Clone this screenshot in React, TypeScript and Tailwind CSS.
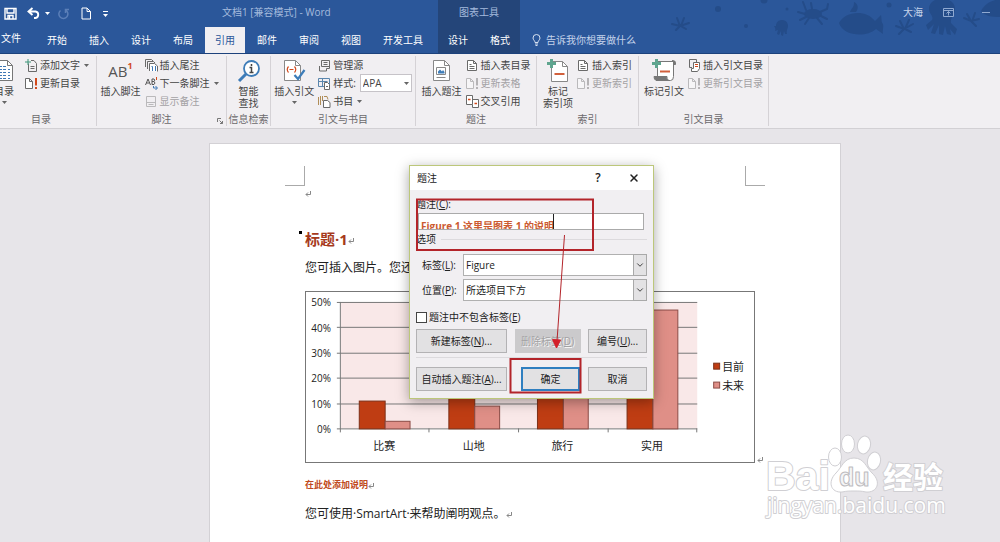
import React from "react";
import type { ReactNode } from "react";
import { ChevronDown, X } from "lucide-react";

/* ---------- small shared pieces ---------- */

function Caret({ className = "" }: { className?: string }) {
  return (
    <svg viewBox="0 0 5 3" className={`h-[3px] w-[5px] shrink-0 fill-current ${className}`} aria-hidden="true">
      <path d="M0 0h5L2.5 3z" />
    </svg>
  );
}

function Icon({ children, dim = false }: { children: ReactNode; dim?: boolean }) {
  return (
    <svg
      viewBox="0 0 13 13"
      className={`h-[13px] w-[13px] shrink-0 ${dim ? "opacity-40" : ""}`}
      fill="none"
      stroke="#6a6a6a"
      strokeWidth="1"
      aria-hidden="true"
    >
      {children}
    </svg>
  );
}

const PageUpdate = ({ dim = false }: { dim?: boolean }) => (
  <Icon dim={dim}>
    <path d="M.5 1.5h4l3 3v7h-7zM4.500 1.500v3h3" fill="#fff" />
    <path d="M11 1v7.500M11 10v2" stroke={dim ? "#5c5c5c" : "#d2491c"} strokeWidth="2" />
  </Icon>
);

const PageLines = () => (
  <Icon>
    <path d="M1.500 1.500h6l3 3v7h-9zM7.500 1.500v3h3" fill="#fff" />
    <path d="M3.500 5.500h2M3.500 7.500h5M3.500 9.500h5" />
  </Icon>
);

function BigButton({ icon, children, arrow = false }: { icon: ReactNode; children: ReactNode; arrow?: boolean }) {
  return (
    <button type="button" className="flex shrink-0 flex-col items-center whitespace-nowrap leading-3">
      <span className="flex h-[29px] items-center">{icon}</span>
      <span>{children}</span>
      {arrow && <Caret className="mt-1 text-[#666]" />}
    </button>
  );
}

function SmallButton({
  icon,
  children,
  arrow = false,
  disabled = false,
}: {
  icon: ReactNode;
  children: ReactNode;
  arrow?: boolean;
  disabled?: boolean;
}) {
  return (
    <button
      type="button"
      disabled={disabled}
      className="flex h-[18px] items-center gap-[2px] whitespace-nowrap disabled:text-[#a3a1a4]"
    >
      {icon}
      <span>{children}</span>
      {arrow && <Caret className="ml-[2px] text-[#666]" />}
    </button>
  );
}

function Group({ label, className, children }: { label: string; className: string; children: ReactNode }) {
  return (
    <section
      aria-label={label}
      className={`relative flex shrink-0 flex-col border-r border-[#d5d2d6] ${className}`}
    >
      <div className="flex h-14 justify-center gap-1">{children}</div>
      <div className="whitespace-nowrap text-center leading-[14px] text-[#6b696c]">{label}</div>
    </section>
  );
}

/* ---------- header ---------- */

function Tab({ children, active = false }: { children: ReactNode; active?: boolean }) {
  return (
    <button
      type="button"
      role="tab"
      aria-selected={active}
      className={`h-[26px] whitespace-nowrap px-[10px] ${active ? "bg-[#f1eff2] text-[#2b579a]" : "text-white"}`}
    >
      {children}
    </button>
  );
}

function SeaPattern() {
  return (
    <svg
      viewBox="0 0 340 53"
      className="pointer-events-none absolute right-0 top-0 h-[53px] w-[340px]"
      fill="#244c89"
      stroke="#244c89"
      aria-hidden="true"
    >
      <g stroke="none">
        <circle cx="58" cy="9" r="3" />
        <circle cx="104" cy="0" r="3.500" />
        <circle cx="86" cy="26" r="2" />
        <circle cx="127" cy="9" r="1.500" />
        <circle cx="229" cy="5" r="2.500" />
        <path d="M116 26c0-8 12-8 12 0 0 3-2 4-1 8h-2l-1-3-1 5-2-1v-4l-2 4-2-1 1-4-3 1c1-2 0-3-1-5z" />
        <path d="M179 23c6-12 27-14 36-2l6-6c1 5 0 7 2 9 1 3-1 7 0 10l-7-5c-10 9-33 7-37-6z" />
        <path d="M190 12c2-5 4-4 4-10 4 2 5 6 2 10z" />
        <path d="M269 9c0-14 26-14 26 0 0 7-5 8-4 14l6 6-2 6-5-6 1 6-4-1-2-8-2 9-4-1 0-9-4 9-4-1 3-9-6 6-2-5 6-5c2-4-3-6-3-11z" />
        <path d="M321 11c4-8 12-11 19-12v18c-9 0-15-1-19-6z" />
        <ellipse cx="153" cy="14" rx="9" ry="5" />
      </g>
      <g fill="none" strokeWidth="2" strokeLinecap="round">
        <path d="M145 14l-7-2M146 17l-6 3M149 18l-4 6M160 12l7-3 1-5M161 16l6 3M157 18l5 6M146 10l-3-8M152 9l-1-6" />
        <path d="M12 24l8 2 9-3M17 18l3 8-4 4M24 18l-3 8 5 3" />
        <path d="M236 26l8 3 9-5M240 21l4 8-5 5M249 20l-4 9 6 3" />
        <path d="M304 18l7 3 8-2M307 14l4 7M315 13l-3 9 4 4" />
      </g>
    </svg>
  );
}

function Header() {
  return (
    <header className="relative flex h-[54px] overflow-hidden border-b border-[#1d427c] bg-[#2b579a]">
      <SeaPattern />
      <div className="relative flex w-[438px] shrink-0 flex-col">
        <div className="flex h-7 items-center text-white">
          <div className="flex w-[222px] items-center pl-1">
            <button type="button" aria-label="保存">
              <svg viewBox="0 0 13 13" className="h-[13px] w-[13px]" fill="none" stroke="#fff" strokeWidth="1.400">
                <path d="M1 1.500h11v10.500H1zM3 1.500v4.500h7V1.500M4 12V8.500h5V12" />
                <path d="M5.500 9v3" />
              </svg>
            </button>
            <button type="button" aria-label="撤消" className="ml-[10px] flex items-center gap-1">
              <svg viewBox="0 0 14 13" className="h-[13px] w-[14px]" fill="none" stroke="#fff" strokeWidth="1.900">
                <path d="M5.500 1L1.500 4.500l4 3.500M2 4.500h6.500a3.300 3.300 0 0 1 0 6.500H7" />
              </svg>
              <Caret />
            </button>
            <button type="button" aria-label="重复" className="ml-[7px]">
              <svg viewBox="0 0 12 12" className="h-3 w-3" fill="none" stroke="#5b7fb8" strokeWidth="1.500">
                <path d="M8.500 2A4.500 4.500 0 1 1 3.500 2.500M8.500 5V1.500H12" />
              </svg>
            </button>
            <button type="button" aria-label="新建" className="ml-3">
              <svg viewBox="0 0 10 13" className="h-[13px] w-[10px]" fill="none" stroke="#fff">
                <path d="M1 1h5l3.500 3.500V12H1zM6 1v3.500h3.500" />
              </svg>
            </button>
            <button type="button" aria-label="自定义快速访问工具栏" className="ml-3 flex flex-col items-center gap-[2px]">
              <span className="h-px w-[5px] bg-white" />
              <Caret />
            </button>
          </div>
          <h1 className="whitespace-nowrap pb-[3px] text-[#a5bbdd]">文档1 [兼容模式] - Word</h1>
        </div>
        <nav role="tablist" aria-label="功能区" className="flex gap-[2px]">
          <button type="button" className="h-[22px] w-[35px] whitespace-nowrap pl-px text-left text-white">文件</button>
          <Tab>开始</Tab>
          <Tab>插入</Tab>
          <Tab>设计</Tab>
          <Tab>布局</Tab>
          <Tab active>引用</Tab>
          <Tab>邮件</Tab>
          <Tab>审阅</Tab>
          <Tab>视图</Tab>
          <Tab>开发工具</Tab>
        </nav>
      </div>
      <div className="relative flex shrink-0 flex-col bg-[#244579]">
        <div className="h-7 pt-[5px] text-center text-[#a5bbdd]">图表工具</div>
        <div className="flex gap-[2px]">
          <Tab>设计</Tab>
          <Tab>格式</Tab>
        </div>
      </div>
      <div className="relative flex min-w-0 flex-1 flex-col">
        <div className="flex h-7 items-center justify-end gap-5 pb-[3px] pr-[10px] text-[#c5d3ea]">
          <span>大海</span>
          <button type="button" aria-label="功能区显示选项">
            <svg viewBox="0 0 11 9" className="h-[9px] w-[11px]" fill="none" stroke="#8fa9d1">
              <path d="M.5.5h10v8H.5zM.5 2.500h10M5.500 7.500v-4M3.500 5.500l2-2 2 2" />
            </svg>
          </button>
          <button type="button" aria-label="最小化" className="ml-2 h-px w-2 bg-[#8fa9d1]" />
        </div>
        <button type="button" className="flex h-[26px] items-center gap-[5px] whitespace-nowrap pl-3 text-[#c5d3ea]">
          <svg viewBox="0 0 9 12" className="h-3 w-[9px]" fill="none" stroke="#d7e1f1">
            <path d="M3 8.500C3 6.500 1 6 1 4a3.500 3.500 0 0 1 7 0c0 2-2 2.500-2 4.500zM3 10h3M3.500 11.500h2" />
          </svg>
          告诉我你想要做什么
        </button>
      </div>
    </header>
  );
}

/* ---------- ribbon ---------- */

function Ribbon() {
  return (
    <div className="flex overflow-hidden border-b border-[#d2d0d4] bg-[#f1eff2] py-[2px] text-[#444]">
      <Group label="目录" className="w-[97px] pr-[14px]">
        <div className="flex gap-[10px]">
          <BigButton
            arrow
            icon={
              <svg viewBox="0 0 22 24" className="h-6 w-[22px]" fill="none" stroke="#777">
                <path d="M1.500 1.500h13l5 5v15h-18z" fill="#fff" />
                <path d="M14.500 1.500v5h5" />
                <path d="M4 7.500h9M4 10.500h9M4 13.500h9M4 16.500h9M4 19.500h9" stroke="#3f78b5" strokeDasharray="5 1" />
                <path d="M15 10.500h2M15 13.500h2M15 16.500h2M15 19.500h2" stroke="#3f78b5" />
              </svg>
            }
          >
            目录
          </BigButton>
          <div>
            <SmallButton
              arrow
              icon={
                <Icon>
                  <path d="M3.500 4.500v8h8v-8l-2.500-3H6M5.500 7.500h4M5.500 9.500h4" />
                  <path d="M3 0v6M0 3h6" stroke="#3c9478" />
                </Icon>
              }
            >
              添加文字
            </SmallButton>
            <SmallButton icon={<PageUpdate />}>更新目录</SmallButton>
          </div>
        </div>
      </Group>

      <Group label="脚注" className="w-[130px]">
        <BigButton
          icon={
            <span className="flex items-start text-[15px] leading-5 text-[#555]">
              AB<b className="text-[9px] leading-[10px] text-[#d2491c]">1</b>
            </span>
          }
        >
          插入脚注
        </BigButton>
        <div className="pr-1">
          <SmallButton
            icon={
              <Icon>
                <path d="M.5 8V.5h6L8 2M2.500 10V2.500h6L10 4" />
                <path d="M4.500 12V4.500h5l3 2.500v5.500" fill="#fff" />
                <path d="M6.500 7.500h1V12M10.500 7v5" stroke="#3f78b5" />
              </Icon>
            }
          >
            插入尾注
          </SmallButton>
          <SmallButton
            arrow
            icon={
              <svg viewBox="0 0 13 13" className="h-[13px] w-[13px] shrink-0" fill="none" stroke="#555" aria-hidden="true">
                <path d="M.5 8L3 2l2.500 6M1.500 6h3M7 2v5.500h2q2-1.500 0-3 1.500-1.500 0-2.500zM7 4.500h2" />
                <path d="M11.500 0v3" stroke="#d2491c" />
                <path d="M8.500 9v2H12M10.500 9l2 2-2 2" stroke="#3f78b5" />
              </svg>
            }
          >
            下一条脚注
          </SmallButton>
          <SmallButton
            disabled
            icon={
              <Icon dim>
                <path d="M1.500 1.500h9v10h-9zM1.500 7.500h9M3.500 9.500h5" />
              </Icon>
            }
          >
            显示备注
          </SmallButton>
        </div>
        <button type="button" aria-label="脚注和尾注选项" className="absolute bottom-[2px] right-[3px]">
          <svg viewBox="0 0 6 6" className="h-[6px] w-[6px]" fill="none" stroke="#777">
            <path d="M.5 4V.5H4M2.500 2.500l3 3M5.500 3v2.500H3" />
          </svg>
        </button>
      </Group>

      <Group label="信息检索" className="w-[44px]">
        <BigButton
          icon={
            <svg viewBox="0 0 24 24" className="h-6 w-6" fill="none" stroke="#3d7cb8">
              <circle cx="14.500" cy="9.500" r="7.500" strokeWidth="1.800" fill="#fff" />
              <path d="M9 15l-7 7" strokeWidth="3" />
              <path d="M14.500 5v2M12.500 8.500h2v5M12.500 13.500h4" stroke="#444" strokeWidth="1.500" />
            </svg>
          }
        >
          智能
          <br />
          查找
        </BigButton>
      </Group>

      <Group label="引文与书目" className="w-[145px]">
        <BigButton
          arrow
          icon={
            <svg viewBox="0 0 24 24" className="h-6 w-6" fill="none" stroke="#888">
              <path d="M2.500 1.500h11l5 5v15h-16z" fill="#fff" />
              <path d="M13.500 1.500v5h5" />
              <path d="M6.500 7.500Q4 10.500 6.500 13.500M12.500 7.500q2.500 3 0 6M7.500 10.500h4" stroke="#d2491c" strokeWidth="1.200" />
              <path d="M12.500 16l3.500 4 6.500-9" stroke="#3d7cb8" strokeWidth="2.200" />
            </svg>
          }
        >
          插入引文
        </BigButton>
        <div>
          <SmallButton
            icon={
              <Icon>
                <path d="M3.500 1.500h8v6h-8zM1.500 7v5h7V9.500h3V7M5.500 3.500h4M5.500 5.500h4" />
              </Icon>
            }
          >
            管理源
          </SmallButton>
          <div className="flex h-[18px] items-center gap-[2px]">
            <Icon>
              <path d="M.5 1.500h11v8H.5zM.5 4.500h9M4.500 1.500v8" stroke="#5a86ad" />
              <path d="M6.500 5.500h3l2 2v5h-5z" fill="#fff" />
              <path d="M8 9.500h2" />
            </Icon>
            <label htmlFor="citation-style" className="whitespace-nowrap">样式:</label>
            <div className="relative ml-[2px]">
              <select
                id="citation-style"
                defaultValue="APA"
                className="block h-[18px] w-[52px] appearance-none border border-[#c6c3c8] bg-white pl-[2px] text-[#444]"
              >
                <option>APA</option>
              </select>
              <Caret className="pointer-events-none absolute right-[3px] top-2 text-[#666]" />
            </div>
          </div>
          <SmallButton
            arrow
            icon={
              <Icon>
                <path d="M.5 2v8M2.500 1v9M4.500 1v5" stroke="#b08d57" />
                <path d="M6 1.500h3l1 3" stroke="#b08d57" />
                <path d="M5.500 5.500h4l2.500 2v5h-6.500z" fill="#fff" />
              </Icon>
            }
          >
            书目
          </SmallButton>
        </div>
      </Group>

      <Group label="题注" className="w-[121px]">
        <BigButton
          icon={
            <svg viewBox="0 0 20 24" className="h-6 w-5" fill="none" stroke="#888">
              <path d="M1.500 1.500h11l5 5v15h-16z" fill="#fff" />
              <path d="M12.500 1.500v5h5" />
              <path d="M4.500 8.500h9v7h-9z" />
              <path d="M6 14.500v-2l2-2 2 2 1-1.500 1.500 2v1.500z" fill="#3d7cb8" stroke="none" />
              <path d="M4.500 18.500h9" />
            </svg>
          }
        >
          插入题注
        </BigButton>
        <div>
          <SmallButton icon={<PageLines />}>插入表目录</SmallButton>
          <SmallButton disabled icon={<PageUpdate dim />}>更新表格</SmallButton>
          <SmallButton
            icon={
              <Icon>
                <path d="M.5.5h6v9h-6zM6.500 4.500h6v8h-6v-3" fill="#fff" />
                <path d="M2 4.500h2.500M8.500 8.500H11" stroke="#d2491c" strokeWidth="1.500" />
              </Icon>
            }
          >
            交叉引用
          </SmallButton>
        </div>
      </Group>

      <Group label="索引" className="w-[102px]">
        <BigButton
          icon={
            <svg viewBox="0 0 22 24" className="h-6 w-[22px]" fill="none" stroke="#888">
              <path d="M4.500 2.500h11l5 5v15h-16z" fill="#fff" />
              <path d="M15.500 2.500v5h5" />
              <path d="M7.500 15h10" stroke="#d2603c" strokeWidth="2" />
              <path d="M4.500 0v9M0 4.500h9" stroke="#5fa58f" strokeWidth="3" />
            </svg>
          }
        >
          标记
          <br />
          索引项
        </BigButton>
        <div>
          <SmallButton icon={<PageLines />}>插入索引</SmallButton>
          <SmallButton disabled icon={<PageUpdate dim />}>更新索引</SmallButton>
        </div>
      </Group>

      <Group label="引文目录" className="w-[130px]">
        <BigButton
          icon={
            <svg viewBox="0 0 26 24" className="h-6 w-[26px]" fill="none" stroke="#777">
              <path d="M6.500 2.500h16v15q0 4-3 4h-13z" fill="#fff" />
              <path d="M21 1.500q3.500 0 3.500 2v2h-2v-3" fill="#777" />
              <path d="M3 17.500h13q-1 3 2 4H5q-2-1-2-4z" fill="#777" />
              <path d="M9 12.500h10" stroke="#d2603c" strokeWidth="2" />
              <path d="M5.500 0v9M1 4.500h9" stroke="#5fa58f" strokeWidth="3" />
            </svg>
          }
        >
          标记引文
        </BigButton>
        <div>
          <SmallButton
            icon={
              <Icon>
                <path d="M4 8.500H1.500v-8h7V3" />
                <path d="M5.500 3.500h6v6l-2 3h-6v-3h2z" fill="#fff" />
                <path d="M7 5.500h3M7 7.500h3" stroke="#d2491c" />
              </Icon>
            }
          >
            插入引文目录
          </SmallButton>
          <SmallButton disabled icon={<PageUpdate dim />}>更新引文目录</SmallButton>
        </div>
      </Group>
    </div>
  );
}

/* ---------- document ---------- */

const series = [
  { name: "比赛", now: 11, next: 3 },
  { name: "山地", now: 20, next: 9 },
  { name: "旅行", now: 30, next: 18 },
  { name: "实用", now: 40, next: 47 },
];

function Chart() {
  const base = 137.5;
  const unit = 2.54;
  return (
    <svg viewBox="0 0 450 171" className="block w-full border border-[#777]" role="img" aria-label="图表">
      <rect x="35" y="10" width="358" height="127" fill="#f9e8e8" />
      <g stroke="#777">
        {[0, 10, 20, 30, 40, 50].map((v) => (
          <line key={v} x1="31" x2="393" y1={Math.floor(base - v * unit) + 0.5} y2={Math.floor(base - v * unit) + 0.5} />
        ))}
        <line x1="34.500" x2="34.500" y1="10" y2="141" />
        {[1, 2, 3, 4].map((n) => (
          <line key={n} x1={Math.floor(34 + n * 89.7) + 0.5} x2={Math.floor(34 + n * 89.7) + 0.5} y1="137" y2="141" />
        ))}
      </g>
      <g fontSize="10" fill="#222" textAnchor="end">
        {[0, 10, 20, 30, 40, 50].map((v) => (
          <text key={v} x="25" y={base - v * unit + 4}>
            {v}%
          </text>
        ))}
      </g>
      {series.map((s, i) => {
        const x = Math.round(53 + i * 89.7) + 0.5;
        return (
          <g key={s.name}>
            <rect x={x} y={base - s.now * unit} width="26" height={s.now * unit} fill="#bf3d13" stroke="#7c3018" />
            <rect x={x + 26} y={base - s.next * unit} width="25" height={s.next * unit} fill="#df8f87" stroke="#8b4c46" />
            <text x={x + 25} y="159" fontSize="11" fill="#222" textAnchor="middle">
              {s.name}
            </text>
          </g>
        );
      })}
      <rect x="409.500" y="71.500" width="6" height="6" fill="#bf3d13" stroke="#7c3018" />
      <rect x="409.500" y="90.500" width="6" height="6" fill="#df8f87" stroke="#8b4c46" />
      <g fontSize="11" fill="#222">
        <text x="418" y="79">目前</text>
        <text x="418" y="98">未来</text>
      </g>
    </svg>
  );
}

function Mark() {
  return (
    <svg viewBox="0 0 6 6" className="inline-block h-[6px] w-[6px]" fill="none" stroke="#888" aria-hidden="true">
      <path d="M5.500 0v3.500H1M3 1.500l-2 2 2 2" />
    </svg>
  );
}

function DocumentPage() {
  return (
    <main className="flex flex-1 justify-center bg-[#e7e5e9] pl-[50px] pt-[14px]">
      <article className="w-full max-w-[632px] border border-b-0 border-[#d3d1d5] bg-white pl-[95px] pr-[85px] pt-[22px] text-[#222]">
        <div className="-ml-5 -mr-[10px] flex justify-between">
          <span className="h-5 w-5 border-b border-r border-[#aaa]" />
          <span className="h-5 w-5 border-b border-l border-[#aaa]" />
        </div>
        <p className="h-[14px] leading-[14px]"><Mark /></p>
        <h2 className="relative mt-[27px] text-[15px] font-bold leading-6 text-[#a63a1c]">
          <span className="absolute -left-[6px] top-1 h-[3px] w-[3px] bg-black" />
          标题·1<Mark />
        </h2>
        <p className="mt-[9px] whitespace-nowrap text-[12px] leading-4">您可插入图片。您还</p>
        <div className="relative mt-[15px]">
          <Chart />
          <span className="absolute -right-2 bottom-0 flex"><Mark /></span>
        </div>
        <p className="mt-[14px] text-[9px] font-bold leading-4 text-[#c04a20]">在此处添加说明<Mark /></p>
        <p className="mt-[13px] text-[12px] leading-4">
          您可使用·SmartArt·来帮助阐明观点。<Mark />
        </p>
      </article>
    </main>
  );
}

/* ---------- caption dialog ---------- */

function DialogSelect({ id, label, hotkey, value }: { id: string; label: string; hotkey: string; value: string }) {
  return (
    <div className="flex items-center pl-[6px]">
      <label htmlFor={id} className="w-[41px] whitespace-nowrap">
        {label}(<u>{hotkey}</u>):
      </label>
      <div className="relative flex-1">
        <select
          id={id}
          defaultValue={value}
          className="block h-[22px] w-full appearance-none border border-[#b0b0b0] bg-white pl-[2px] pr-4 text-[#222]"
        >
          <option>{value}</option>
        </select>
        <span className="pointer-events-none absolute inset-y-0 right-0 flex w-[14px] items-center justify-center border border-[#a9a9a9] bg-[#e3e2e4]">
          <ChevronDown className="h-[10px] w-[10px] shrink-0" />
        </span>
      </div>
    </div>
  );
}

const dialogButton = "h-6 whitespace-nowrap border border-[#b3b2b4] bg-[#e2e1e3]";

function CaptionDialog() {
  return (
    <div
      role="dialog"
      aria-label="题注"
      className="absolute left-[409px] top-[165px] w-[245px] border border-[#bcc77a] bg-[#f1eff2] text-[#222] shadow-[0_3px_12px_rgba(0,0,0,0.35)]"
    >
      <div className="flex h-6 items-center bg-white pl-[7px] pr-[13px]">
        <h2 className="flex-1">题注</h2>
        <button type="button" aria-label="帮助" className="w-3 text-[12px] font-semibold leading-4">?</button>
        <button type="button" aria-label="关闭" className="ml-6">
          <X className="h-3 w-3" strokeWidth={3} />
        </button>
      </div>
      <form className="px-[6px] pb-[7px] pt-[6px]">
        <label htmlFor="caption-text" className="block leading-4">
          题注(<u>C</u>):
        </label>
        <div className="relative ml-[2px] mr-[3px] mt-px h-[17px] overflow-hidden border border-[#aaa] bg-white">
          <input
            id="caption-text"
            type="text"
            defaultValue="Figure 1 这里是图表 1 的说明"
            className="mt-[3px] block h-4 w-full pl-[2px] font-bold text-[#cc5a30] outline-none"
          />
          <span className="absolute left-[134px] top-0 h-4 w-px bg-[#222]" />
        </div>
        <div className="mt-px flex items-center gap-[5px] leading-4">
          选项
          <span className="h-px flex-1 bg-[#dcdadd]" />
        </div>
        <div className="mt-[7px] flex flex-col gap-[3px]">
          <DialogSelect id="caption-label" label="标签" hotkey="L" value="Figure" />
          <DialogSelect id="caption-position" label="位置" hotkey="P" value="所选项目下方" />
        </div>
        <label className="mt-2 flex items-center gap-[2px] leading-4">
          <input type="checkbox" className="h-[11px] w-[11px] appearance-none border border-[#444] bg-white" />
          <span>
            题注中不包含标签(<u>E</u>)
          </span>
        </label>
        <div className="mt-1 flex justify-between">
          <button type="button" className={`${dialogButton} w-[91px]`}>
            新建标签(<u>N</u>)...
          </button>
          <button
            type="button"
            disabled
            className="h-6 w-[66px] whitespace-nowrap bg-[#cbcacc] text-[#a3a2a4] [text-shadow:1px_1px_0_#f4f4f4]"
          >
            删除标签(<u>D</u>)
          </button>
          <button type="button" className={`${dialogButton} w-[59px]`}>
            编号(<u>U</u>)...
          </button>
        </div>
        <div className="my-1 h-px bg-[#dcdadd]" />
        <div className="mt-[9px] flex">
          <button type="button" className={`${dialogButton} w-[91px]`}>
            自动插入题注(<u>A</u>)...
          </button>
          <button type="submit" className="ml-auto h-6 w-[59px] border-2 border-[#2f7fc0] bg-[#e2e1e3]">
            确定
          </button>
          <button type="button" className={`${dialogButton} ml-2 w-[59px]`}>
            取消
          </button>
        </div>
      </form>
    </div>
  );
}

/* Red boxes and arrow drawn over the dialog. */
function Annotations() {
  return (
    <svg
      viewBox="0 0 190 200"
      className="pointer-events-none absolute left-[410px] top-[195px] h-[200px] w-[190px]"
      fill="none"
      stroke="#b3242a"
      aria-hidden="true"
    >
      <path d="M7 4.500h176v50.500H7z" strokeWidth="2" />
      <path d="M100.500 164h70v33.500h-70z" strokeWidth="2" />
      <path d="M154.500 40L147 146" />
      <path d="M142.500 144.500l4 8.500 4-8z" fill="#d3202a" stroke="#d3202a" />
    </svg>
  );
}

function Watermark() {
  return (
    <svg
      viewBox="0 0 190 95"
      className="pointer-events-none absolute bottom-[17px] right-[50px] h-[95px] w-[190px]"
      fill="#fff"
      stroke="#d0cfd3"
      strokeWidth="2"
      strokeLinejoin="round"
      aria-label="Baidu 经验"
    >
      <g className="font-['Liberation_Sans','Noto_Sans_CJK_SC',sans-serif]" fontWeight="bold" paintOrder="stroke">
        <text x="6" y="60" fontSize="41">Bai</text>
        <text x="123" y="58" fontSize="30">经验</text>
      </g>
      <g strokeWidth="1">
        <ellipse cx="75" cy="27" rx="6.500" ry="9" />
        <ellipse cx="88" cy="14" rx="6.500" ry="9" />
        <ellipse cx="104" cy="15" rx="6.500" ry="9" transform="rotate(12 104 15)" />
        <ellipse cx="114" cy="31" rx="6.500" ry="9" transform="rotate(12 114 31)" />
        <path d="M94 28c10 0 12 9 18 15 10 9 5 20-6 19-5-1-7-1-12-1s-7 0-12 1c-11 1-15-10-6-19 6-6 8-15 18-15z" />
      </g>
      <text x="79" y="56" fontSize="25" fontWeight="bold" fill="#f4f4f5" stroke="#bdbcbf" strokeWidth="1" className="font-['Liberation_Sans',sans-serif]">du</text>
      <text x="7" y="83" fontSize="21" strokeWidth="2" paintOrder="stroke" className="font-['Open_Sans',sans-serif]">
        jingyan.baidu.com
      </text>
    </svg>
  );
}

export default function App() {
  return (
    <div className="relative flex min-h-screen flex-col overflow-hidden bg-[#e7e5e9] font-['Open_Sans','Noto_Sans_CJK_SC',sans-serif] text-[10px]">
      <Header />
      <Ribbon />
      <DocumentPage />
      <CaptionDialog />
      <Annotations />
      <Watermark />
    </div>
  );
}
